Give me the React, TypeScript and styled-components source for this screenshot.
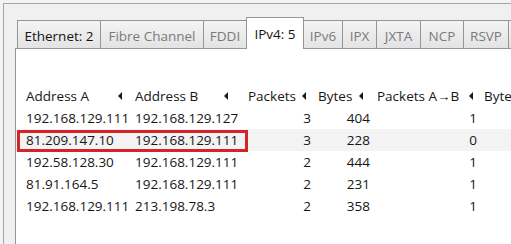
import styled, { createGlobalStyle } from 'styled-components'

const GlobalStyle = createGlobalStyle`
  html, body {
    margin: 0;
    padding: 0;
    background: #f0f0f0;
  }
  body {
    font-family: "Open Sans", "Liberation Sans", sans-serif;
  }
`

const Frame = styled.div`
  width: 511px;
  height: 244px;
  box-sizing: border-box;
  padding: 3px 0 0 3px;
  background: #f3f3f3;
  overflow: hidden;
`

const Window = styled.div`
  height: 100%;
  box-sizing: border-box;
  border-top: 1px solid #a5a5a5;
  border-left: 1px solid #a5a5a5;
  background: #f0f0f0;
  padding: 13px 0 0 11px;
  display: flex;
  flex-direction: column;
`

const TabStrip = styled.div`
  display: flex;
  align-items: flex-end;
  height: 31px;
  padding-left: 2px;
  position: relative;
  z-index: 1;
`

const Tab = styled.div<{ $w: number; $active?: boolean; $filled?: boolean }>`
  flex-shrink: 0;
  width: ${(p) => p.$w}px;
  height: ${(p) => (p.$active ? 32 : 28)}px;
  margin-bottom: ${(p) => (p.$active ? -1 : 0)}px;
  margin-right: -1px;
  box-sizing: border-box;
  border: 1px solid #959595;
  border-bottom: none;
  background: ${(p) => (p.$active ? '#ffffff' : 'linear-gradient(#f4f4f4, #e3e3e3)')};
  color: ${(p) => (p.$active || p.$filled ? '#141414' : '#7a7a7a')};
  font-size: 13.5px;
  display: flex;
  align-items: center;
  justify-content: center;
  padding-top: ${(p) => (p.$active ? 0 : 2)}px;
  white-space: nowrap;
`

const Panel = styled.div`
  flex: 1;
  background: #ffffff;
  border-top: 1px solid #959595;
  border-left: 1px solid #959595;
  padding-top: 36px;
`

const Table = styled.div`
  position: relative;
  font-size: 13.5px;
  color: #161616;
`

const Row = styled.div<{ $shade?: boolean }>`
  display: grid;
  grid-template-columns: 109px 113px 70px 59px 107px 80px;
  height: 22px;
  align-items: center;
  padding-left: 4px;
  background: ${(p) => (p.$shade ? '#f3f3f3' : 'transparent')};
  white-space: nowrap;
`

const HeadCell = styled.div<{ $arrowPad: number }>`
  display: flex;
  align-items: center;
  padding-left: 6px;
  padding-right: ${(p) => p.$arrowPad}px;
  overflow: hidden;
`

const SortArrow = styled.span`
  margin-left: auto;
  flex-shrink: 0;
  width: 0;
  height: 0;
  border-top: 4px solid transparent;
  border-bottom: 4px solid transparent;
  border-right: 4px solid #1a1a1a;
`

const Cell = styled.div<{ $right?: boolean }>`
  padding: 0 ${(p) => (p.$right ? 1 : 6)}px 0 6px;
  text-align: ${(p) => (p.$right ? 'right' : 'left')};
  overflow: hidden;
`

const Highlight = styled.div`
  position: absolute;
  left: 1px;
  top: 45px;
  width: 231px;
  height: 22px;
  box-sizing: border-box;
  border: 3px solid #d5232a;
  pointer-events: none;
`

const tabs = [
  { label: 'Ethernet: 2', w: 84, filled: true },
  { label: 'Fibre Channel', w: 104 },
  { label: 'FDDI', w: 44 },
  { label: 'IPv4: 5', w: 58, active: true },
  { label: 'IPv6', w: 40 },
  { label: 'IPX', w: 35 },
  { label: 'JXTA', w: 45 },
  { label: 'NCP', w: 44 },
  { label: 'RSVP', w: 46 },
  { label: 'SCTP', w: 45 },
]

const headers = [
  { label: 'Address A', pad: 7 },
  { label: 'Address B', pad: 14 },
  { label: 'Packets', pad: 6 },
  { label: 'Bytes', pad: 8 },
  { label: 'Packets A\u2192B', pad: 5 },
  { label: 'Bytes A\u2192B', pad: 5 },
]

const rows = [
  ['192.168.129.111', '192.168.129.127', '3', '404', '1', '70'],
  ['81.209.147.10', '192.168.129.111', '3', '228', '0', '0'],
  ['192.58.128.30', '192.168.129.111', '2', '444', '1', '222'],
  ['81.91.164.5', '192.168.129.111', '2', '231', '1', '60'],
  ['192.168.129.111', '213.198.78.3', '2', '358', '1', '179'],
]

export default function App() {
  return (
    <Frame>
      <GlobalStyle />
      <Window>
        <TabStrip>
          {tabs.map((t) => (
            <Tab key={t.label} $w={t.w} $active={t.active} $filled={t.filled}>
              {t.label}
            </Tab>
          ))}
        </TabStrip>
        <Panel>
          <Table>
            <Row>
              {headers.map((h) => (
                <HeadCell key={h.label} $arrowPad={h.pad}>
                  {h.label}
                  <SortArrow />
                </HeadCell>
              ))}
            </Row>
            {rows.map((r, i) => (
              <Row key={i} $shade={i === 1}>
                {r.map((v, j) => (
                  <Cell key={j} $right={j >= 2}>
                    {v}
                  </Cell>
                ))}
              </Row>
            ))}
            <Highlight />
          </Table>
        </Panel>
      </Window>
    </Frame>
  )
}
